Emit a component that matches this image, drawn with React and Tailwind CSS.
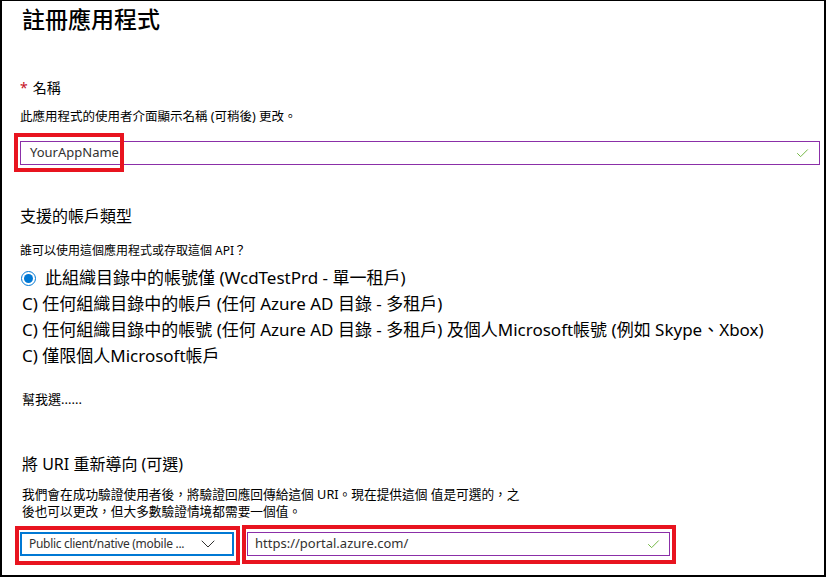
import { ChevronDown, Check } from 'lucide-react';

const font = { fontFamily: '"Noto Sans", "Noto Sans CJK TC", sans-serif' };

function RadioRow({ checked, children }) {
    return (
        <div className="h-[26px] flex items-center text-[17px] text-black whitespace-nowrap">
            {checked ? (
                <>
                    <span className="w-[15px] h-[15px] rounded-full border border-[#0078d4] flex items-center justify-center mr-[9px] -ml-[1px]">
                        <span className="w-[9px] h-[9px] rounded-full bg-[#0078d4]" />
                    </span>
                    {children}
                </>
            ) : (
                <span>C) {children}</span>
            )}
        </div>
    );
}

export default function App() {
    return (
        <div className="w-[827px] h-[578px] bg-white" style={font}>
            <div className="w-[826px] h-[577px] border-2 border-black border-t-[1px] pl-[18px] flex flex-col">
                {/* 標題 */}
                <h1 className="mt-[3px] h-[30px] leading-[30px] text-[23px] font-medium text-black pl-[2px]">註冊應用程式</h1>

                {/* 名稱 */}
                <div className="mt-[44px] h-[20px] leading-[20px] text-[14px] text-black flex items-center">
                    <span className="text-[#c50f1f] mr-[5px]">*</span>名稱
                </div>
                <p className="mt-[10px] h-[18px] leading-[18px] text-[12.5px] text-black">此應用程式的使用者介面顯示名稱 (可稍後) 更改。</p>
                <div className="relative mt-[15px] w-[800px] h-[24px] border border-[#8b2fa8] flex items-center px-[9px]">
                    <span className="text-[13px] text-[#323130]">YourAppName</span>
                    <Check className="ml-auto w-[15px] h-[15px] text-[#6bb33a]" strokeWidth={1.5} />
                    <div className="absolute -left-[7px] -top-[9px] w-[110px] h-[39px] border-4 border-[#e8141f]" />
                </div>

                {/* 帳戶類型 */}
                <h2 className="mt-[40px] h-[22px] leading-[22px] text-[16px] text-black">支援的帳戶類型</h2>
                <p className="mt-[15px] h-[18px] leading-[18px] text-[12px] text-black">誰可以使用這個應用程式或存取這個 API？</p>
                <div className="mt-[5px] flex flex-col pl-[2px]">
                    <RadioRow checked>此組織目錄中的帳號僅 (WcdTestPrd - 單一租戶)</RadioRow>
                    <RadioRow>任何組織目錄中的帳戶 (任何 Azure AD 目錄 - 多租戶)</RadioRow>
                    <RadioRow>任何組織目錄中的帳號 (任何 Azure AD 目錄 - 多租戶) 及個人Microsoft帳號 (例如 Skype、Xbox)</RadioRow>
                    <RadioRow>僅限個人Microsoft帳戶</RadioRow>
                </div>
                <p className="mt-[21px] h-[18px] leading-[18px] text-[13px] text-black pl-[2px]">幫我選......</p>

                {/* 重新導向 URI */}
                <h2 className="mt-[45px] h-[22px] leading-[22px] text-[16px] text-black pl-[2px]">將 URI 重新導向 (可選)</h2>
                <p className="mt-[11px] leading-[17px] text-[12.7px] text-black pl-[2px]">
                    我們會在成功驗證使用者後，將驗證回應回傳給這個 URI。現在提供這個 值是可選的，之<br />
                    後也可以更改，但大多數驗證情境都需要一個值。
                </p>
                <div className="mt-[12px] flex gap-[13px]">
                    <div className="relative w-[214px] h-[24px] border-2 border-[#0078d4] flex items-center pl-[7px] pr-[12px]">
                        <span className="text-[12px] tracking-[-0.3px] text-[#323130] whitespace-nowrap">Public client/native (mobile ...</span>
                        <ChevronDown className="ml-auto w-[24px] h-[24px] text-[#323130]" strokeWidth={1} />
                        <div className="absolute -left-[7px] -top-[8px] w-[225px] h-[39px] border-4 border-[#e8141f]" />
                    </div>
                    <div className="relative w-[423px] h-[24px] border border-[#8b2fa8] flex items-center pl-[7px] pr-[8px]">
                        <span className="text-[13px] text-[#323130]">https://portal.azure.com/</span>
                        <Check className="ml-auto w-[15px] h-[15px] text-[#6bb33a]" strokeWidth={1.5} />
                        <div className="absolute -left-[6px] -top-[8px] w-[434px] h-[39px] border-4 border-[#e8141f]" />
                    </div>
                </div>
            </div>
        </div>
    );
}
